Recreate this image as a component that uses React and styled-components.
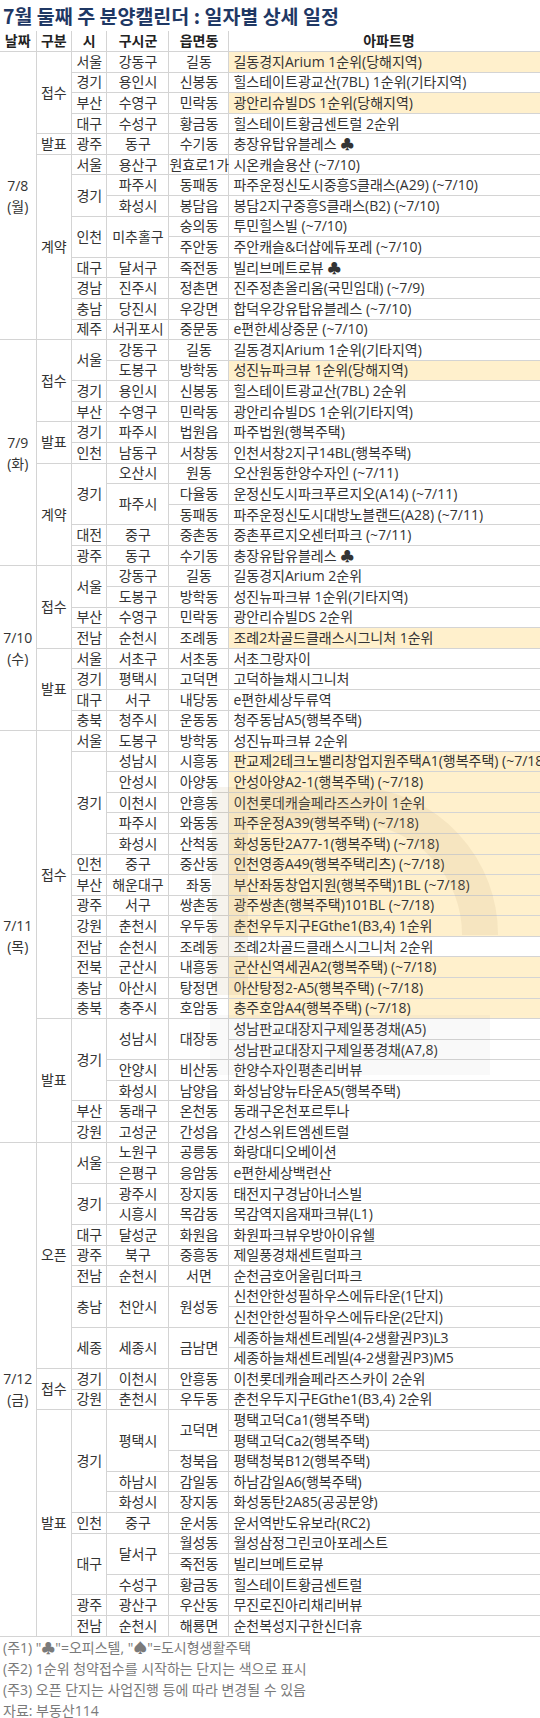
import styled, { createGlobalStyle } from "styled-components";

const GlobalStyle = createGlobalStyle`
  html, body {
    margin: 0;
    padding: 0;
    background: #ffffff;
  }
  body {
    font-family: "Open Sans", "Noto Sans CJK KR", sans-serif;
  }
`;

// 날짜 | 구분 | 시 | 구시군 | 읍면동 | 아파트명 | 색표시
// "텍스트|n" = rowSpan n, 0 = 위 칸에 병합됨
const rows = [
  ["7/8 (월)|14", "접수|4", "서울", "강동구", "길동", "길동경지Arium 1순위(당해지역)", 1],
  [0, 0, "경기", "용인시", "신봉동", "힐스테이트광교산(7BL) 1순위(기타지역)"],
  [0, 0, "부산", "수영구", "민락동", "광안리슈빌DS 1순위(당해지역)", 1],
  [0, 0, "대구", "수성구", "황금동", "힐스테이트황금센트럴 2순위"],
  [0, "발표", "광주", "동구", "수기동", "충장유탑유블레스 ♣"],
  [0, "계약|9", "서울", "용산구", "원효로1가", "시온캐슬용산 (~7/10)"],
  [0, 0, "경기|2", "파주시", "동패동", "파주운정신도시중흥S클래스(A29) (~7/10)"],
  [0, 0, 0, "화성시", "봉담읍", "봉담2지구중흥S클래스(B2) (~7/10)"],
  [0, 0, "인천|2", "미추홀구|2", "숭의동", "투민힐스빌 (~7/10)"],
  [0, 0, 0, 0, "주안동", "주안캐슬&더샵에듀포레 (~7/10)"],
  [0, 0, "대구", "달서구", "죽전동", "빌리브메트로뷰 ♣"],
  [0, 0, "경남", "진주시", "정촌면", "진주정촌올리움(국민임대) (~7/9)"],
  [0, 0, "충남", "당진시", "우강면", "합덕우강유탑유블레스 (~7/10)"],
  [0, 0, "제주", "서귀포시", "중문동", "e편한세상중문 (~7/10)"],

  ["7/9 (화)|11", "접수|4", "서울|2", "강동구", "길동", "길동경지Arium 1순위(기타지역)"],
  [0, 0, 0, "도봉구", "방학동", "성진뉴파크뷰 1순위(당해지역)", 1],
  [0, 0, "경기", "용인시", "신봉동", "힐스테이트광교산(7BL) 2순위"],
  [0, 0, "부산", "수영구", "민락동", "광안리슈빌DS 1순위(기타지역)"],
  [0, "발표|2", "경기", "파주시", "법원읍", "파주법원(행복주택)"],
  [0, 0, "인천", "남동구", "서창동", "인천서창2지구14BL(행복주택)"],
  [0, "계약|5", "경기|3", "오산시", "원동", "오산원동한양수자인 (~7/11)"],
  [0, 0, 0, "파주시|2", "다율동", "운정신도시파크푸르지오(A14) (~7/11)"],
  [0, 0, 0, 0, "동패동", "파주운정신도시대방노블랜드(A28) (~7/11)"],
  [0, 0, "대전", "중구", "중촌동", "중촌푸르지오센터파크 (~7/11)"],
  [0, 0, "광주", "동구", "수기동", "충장유탑유블레스 ♣"],

  ["7/10 (수)|8", "접수|4", "서울|2", "강동구", "길동", "길동경지Arium 2순위"],
  [0, 0, 0, "도봉구", "방학동", "성진뉴파크뷰 1순위(기타지역)"],
  [0, 0, "부산", "수영구", "민락동", "광안리슈빌DS 2순위"],
  [0, 0, "전남", "순천시", "조례동", "조례2차골드클래스시그니처 1순위", 1],
  [0, "발표|4", "서울", "서초구", "서초동", "서초그랑자이"],
  [0, 0, "경기", "평택시", "고덕면", "고덕하늘채시그니처"],
  [0, 0, "대구", "서구", "내당동", "e편한세상두류역"],
  [0, 0, "충북", "청주시", "운동동", "청주동남A5(행복주택)"],

  ["7/11 (목)|20", "접수|14", "서울", "도봉구", "방학동", "성진뉴파크뷰 2순위"],
  [0, 0, "경기|5", "성남시", "시흥동", "판교제2테크노밸리창업지원주택A1(행복주택) (~7/18)", 1],
  [0, 0, 0, "안성시", "아양동", "안성아양A2-1(행복주택) (~7/18)", 1],
  [0, 0, 0, "이천시", "안흥동", "이천롯데캐슬페라즈스카이 1순위", 1],
  [0, 0, 0, "파주시", "와동동", "파주운정A39(행복주택) (~7/18)", 1],
  [0, 0, 0, "화성시", "산척동", "화성동탄2A77-1(행복주택) (~7/18)", 1],
  [0, 0, "인천", "중구", "중산동", "인천영종A49(행복주택리츠) (~7/18)", 1],
  [0, 0, "부산", "해운대구", "좌동", "부산좌동창업지원(행복주택)1BL (~7/18)", 1],
  [0, 0, "광주", "서구", "쌍촌동", "광주쌍촌(행복주택)101BL (~7/18)", 1],
  [0, 0, "강원", "춘천시", "우두동", "춘천우두지구EGthe1(B3,4) 1순위", 1],
  [0, 0, "전남", "순천시", "조례동", "조례2차골드클래스시그니처 2순위"],
  [0, 0, "전북", "군산시", "내흥동", "군산신역세권A2(행복주택) (~7/18)", 1],
  [0, 0, "충남", "아산시", "탕정면", "아산탕정2-A5(행복주택) (~7/18)", 1],
  [0, 0, "충북", "충주시", "호암동", "충주호암A4(행복주택) (~7/18)", 1],
  [0, "발표|6", "경기|4", "성남시|2", "대장동|2", "성남판교대장지구제일풍경채(A5)"],
  [0, 0, 0, 0, 0, "성남판교대장지구제일풍경채(A7,8)"],
  [0, 0, 0, "안양시", "비산동", "한양수자인평촌리버뷰"],
  [0, 0, 0, "화성시", "남양읍", "화성남양뉴타운A5(행복주택)"],
  [0, 0, "부산", "동래구", "온천동", "동래구온천포르투나"],
  [0, 0, "강원", "고성군", "간성읍", "간성스위트엠센트럴"],

  ["7/12 (금)|24", "오픈|11", "서울|2", "노원구", "공릉동", "화랑대디오베이션"],
  [0, 0, 0, "은평구", "응암동", "e편한세상백련산"],
  [0, 0, "경기|2", "광주시", "장지동", "태전지구경남아너스빌"],
  [0, 0, 0, "시흥시", "목감동", "목감역지음재파크뷰(L1)"],
  [0, 0, "대구", "달성군", "화원읍", "화원파크뷰우방아이유쉘"],
  [0, 0, "광주", "북구", "중흥동", "제일풍경채센트럴파크"],
  [0, 0, "전남", "순천시", "서면", "순천금호어울림더파크"],
  [0, 0, "충남|2", "천안시|2", "원성동|2", "신천안한성필하우스에듀타운(1단지)"],
  [0, 0, 0, 0, 0, "신천안한성필하우스에듀타운(2단지)"],
  [0, 0, "세종|2", "세종시|2", "금남면|2", "세종하늘채센트레빌(4-2생활권P3)L3"],
  [0, 0, 0, 0, 0, "세종하늘채센트레빌(4-2생활권P3)M5"],
  [0, "접수|2", "경기", "이천시", "안흥동", "이천롯데캐슬페라즈스카이 2순위"],
  [0, 0, "강원", "춘천시", "우두동", "춘천우두지구EGthe1(B3,4) 2순위"],
  [0, "발표|11", "경기|5", "평택시|3", "고덕면|2", "평택고덕Ca1(행복주택)"],
  [0, 0, 0, 0, 0, "평택고덕Ca2(행복주택)"],
  [0, 0, 0, 0, "청북읍", "평택청북B12(행복주택)"],
  [0, 0, 0, "하남시", "감일동", "하남감일A6(행복주택)"],
  [0, 0, 0, "화성시", "장지동", "화성동탄2A85(공공분양)"],
  [0, 0, "인천", "중구", "운서동", "운서역반도유보라(RC2)"],
  [0, 0, "대구|3", "달서구|2", "월성동", "월성삼정그린코아포레스트"],
  [0, 0, 0, 0, "죽전동", "빌리브메트로뷰"],
  [0, 0, 0, "수성구", "황금동", "힐스테이트황금센트럴"],
  [0, 0, "광주", "광산구", "우산동", "무진로진아리채리버뷰"],
  [0, 0, "전남", "순천시", "해룡면", "순천복성지구한신더휴"],
];

const headers = ["날짜", "구분", "시", "구시군", "읍면동", "아파트명"];
const colWidths = [36, 35.6, 35.4, 62, 60, 320];

const notes = [
  '(주1) "♣"=오피스텔, "♠"=도시형생활주택',
  "(주2) 1순위 청약접수를 시작하는 단지는 색으로 표시",
  "(주3) 오픈 단지는 사업진행 등에 따라 변경될 수 있음",
  "자료: 부동산114",
];

const Page = styled.div`
  width: 540px;
  overflow: hidden;
  position: relative;
`;

const Title = styled.h1`
  margin: 0;
  height: 31px;
  line-height: 31px;
  padding-left: 3px;
  font-family: "Noto Sans CJK KR", sans-serif;
  font-size: 19.5px;
  font-weight: 700;
  color: #1f3864;
  white-space: nowrap;
`;

const Table = styled.table`
  border-collapse: collapse;
  table-layout: fixed;
  width: 549px;
  font-size: 14px;
  color: #333333;
`;

const HeadCell = styled.th`
  height: 20px;
  padding: 0;
  border: 1px solid #d4d4d4;
  border-top: none;
  font-weight: 700;
  color: #222222;
  text-align: center;
  white-space: nowrap;
  line-height: 18px;

  &:first-child {
    border-left: none;
  }
`;

const Row = styled.tr`
  height: 20.58px;
`;

const Cell = styled.td`
  padding: 0;
  border: 1px solid #d4d4d4;
  text-align: center;
  vertical-align: middle;
  white-space: nowrap;
  line-height: 18px;
  background: #ffffff;
`;

const DateCell = styled(Cell)`
  border-left: none;
  line-height: 21px;
`;

const AptCell = styled(Cell)`
  text-align: left;
  padding-left: 4px;
  overflow: hidden;
  background: ${(p) => (p.$hl ? "#fff0cc" : "#ffffff")};
`;

const Notes = styled.div`
  padding-left: 3px;
  font-size: 14px;
  line-height: 21px;
  color: #7a7a7a;
  white-space: nowrap;
`;

const Watermark = styled.svg`
  position: absolute;
  left: 190px;
  top: 745px;
  width: 320px;
  height: 340px;
  pointer-events: none;
`;

const parse = (v) => {
  const [text, span] = String(v).split("|");
  return { text, span: span ? Number(span) : 1 };
};

const TableRow = ({ row }) => {
  const [date, kind, si, gu, dong, apt, hl] = row;
  const plain = [kind, si, gu, dong];
  return (
    <Row>
      {date ? (
        <DateCell rowSpan={parse(date).span}>
          {parse(date)
            .text.split(" ")
            .map((t) => (
              <div key={t}>{t}</div>
            ))}
        </DateCell>
      ) : null}
      {plain.map((v, i) =>
        v ? (
          <Cell key={i} rowSpan={parse(v).span}>
            {parse(v).text}
          </Cell>
        ) : null
      )}
      <AptCell $hl={!!hl}>{apt}</AptCell>
    </Row>
  );
};

const App = () => (
  <Page>
    <GlobalStyle />
    <Title>7월 둘째 주 분양캘린더 : 일자별 상세 일정</Title>
    <Table>
      <colgroup>
        {colWidths.map((w, i) => (
          <col key={i} style={{ width: w }} />
        ))}
      </colgroup>
      <thead>
        <tr>
          {headers.map((h) => (
            <HeadCell key={h}>{h}</HeadCell>
          ))}
        </tr>
      </thead>
      <tbody>
        {rows.map((r, i) => (
          <TableRow key={i} row={r} />
        ))}
      </tbody>
    </Table>
    <Notes>
      {notes.map((n) => (
        <div key={n}>{n}</div>
      ))}
    </Notes>

    {/* 부동산114 워터마크 (링 모양만) */}
    <Watermark viewBox="0 0 320 340">
      <path
        d="M 40 250 L 40 60 L 170 60 A 130 130 0 0 1 290 190"
        fill="none"
        stroke="#b39b6e"
        strokeOpacity="0.12"
        strokeWidth="36"
      />
      <rect x="20" y="270" width="280" height="60" fill="#9a9a9a" fillOpacity="0.06" />
    </Watermark>
  </Page>
);

export default App;
